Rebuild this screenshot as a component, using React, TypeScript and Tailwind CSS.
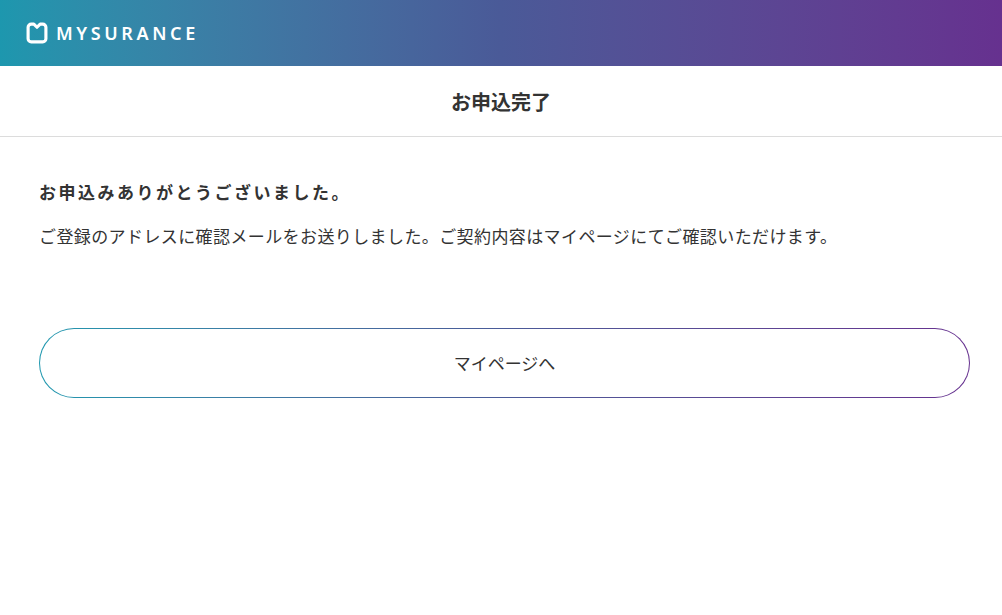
export default function App() {
  return (
    <div className="min-h-[615px] bg-white text-[#333]" style={{ fontFamily: '"Noto Sans CJK JP", "Noto Sans", sans-serif' }}>
      <header className="flex h-[66px] items-center bg-gradient-to-r from-[#1d97ae] via-[#4a5a98] to-[#66318f] px-[26px]">
        <svg width="22" height="22" viewBox="0 0 21 21" className="mr-[8px]">
          <path d="M5 2 H7.5 L10.5 5 L13.5 2 H16 A3 3 0 0 1 19 5 V16 A3 3 0 0 1 16 19 H5 A3 3 0 0 1 2 16 V5 A3 3 0 0 1 5 2 Z" fill="none" stroke="white" strokeWidth="3" strokeLinejoin="round" />
        </svg>
        <span className="text-[18px] font-semibold tracking-[0.2em] text-white" style={{ fontFamily: '"Noto Sans", sans-serif' }}>MYSURANCE</span>
      </header>
      <div className="flex h-[71px] items-center justify-center border-b border-[#dcdcdc] pt-[2px] text-[20px] font-bold">お申込完了</div>
      <main className="px-[39px] pt-[42px]">
        <p className="text-[17px] font-bold tracking-[2.5px]">お申込みありがとうございました。</p>
        <p className="mt-[18px] text-[17px] tracking-[0.4px]">ご登録のアドレスに確認メールをお送りしました。ご契約内容はマイページにてご確認いただけます。</p>
        <div className="mt-[80px] w-[931px] rounded-full bg-gradient-to-r from-[#1d97ae] via-[#4a5a98] to-[#66318f] p-px">
          <button className="flex h-[68px] w-full items-center justify-center rounded-full bg-white text-[17px]">マイページへ</button>
        </div>
      </main>
    </div>
  );
}
